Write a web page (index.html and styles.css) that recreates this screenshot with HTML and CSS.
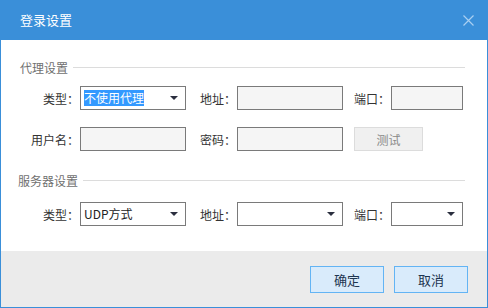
FILE: index.html
```html
<!DOCTYPE html>
<html lang="zh">
<head>
<meta charset="utf-8">
<title>登录设置</title>
<link rel="stylesheet" href="styles.css">
</head>
<body>
<div class="dialog">
  <div class="titlebar">
    <span class="title">登录设置</span>
    <svg class="close" width="11" height="11" viewBox="0 0 11 11"><path d="M0.5 0.5 L10.5 10.5 M10.5 0.5 L0.5 10.5" stroke="#a9cff1" stroke-width="1.2" fill="none"/></svg>
  </div>
  <div class="content">
    <div class="group-head"><span>代理设置</span><i class="rule"></i></div>
    <div class="grid">
      <label class="lbl">类型：</label>
      <div class="ctl select"><span class="sel-text hl">不使用代理</span><span class="arrow"></span></div>
      <label class="lbl">地址：</label>
      <div class="ctl input"></div>
      <label class="lbl">端口：</label>
      <div class="ctl input"></div>

      <label class="lbl">用户名：</label>
      <div class="ctl input"></div>
      <label class="lbl">密码：</label>
      <div class="ctl input"></div>
      <button class="test">测试</button>
    </div>
    <div class="group-head second"><span>服务器设置</span><i class="rule"></i></div>
    <div class="grid">
      <label class="lbl">类型：</label>
      <div class="ctl select"><span class="sel-text">UDP方式</span><span class="arrow"></span></div>
      <label class="lbl">地址：</label>
      <div class="ctl select"><span class="sel-text"></span><span class="arrow"></span></div>
      <label class="lbl">端口：</label>
      <div class="ctl select"><span class="sel-text"></span><span class="arrow"></span></div>
    </div>
  </div>
  <div class="footer">
    <button class="btn">确定</button>
    <button class="btn">取消</button>
  </div>
</div>
</body>
</html>
```
FILE: styles.css
```css
* { box-sizing: border-box; }
html, body { margin: 0; padding: 0; }
body {
  width: 488px;
  height: 308px;
  font-family: "Noto Sans CJK SC", "Noto Sans", sans-serif;
  font-size: 12px;
  color: #333;
  background: #fff;
}
.dialog {
  width: 488px;
  height: 308px;
  display: flex;
  flex-direction: column;
}
.titlebar {
  height: 40px;
  background: #3a8fd9;
  display: flex;
  align-items: center;
  justify-content: space-between;
  padding: 0 14px 0 20px;
}
.title {
  color: #fff;
  font-size: 13px;
  line-height: 16px;
}
.close { display: block; margin-top: 0; }
.content {
  height: 211px;
  border-left: 1px solid #3a8fd9;
  border-right: 1px solid #3a8fd9;
  padding-top: 18px;
}
.group-head {
  height: 18px;
  display: flex;
  align-items: center;
  padding: 0 22px 0 19px;
  color: #707070;
  font-size: 12px;
}
.group-head.second { margin-top: 20px; padding-left: 17px; }
.rule {
  flex: 1;
  height: 1px;
  background: #dcdcdc;
  margin-left: 5px;
  margin-top: 1px;
}
.grid {
  display: grid;
  grid-template-columns: 79px 106px 51px 106px 48px 72px;
  grid-auto-rows: 24px;
  row-gap: 17px;
  margin-top: 10px;
}
.group-head.second + .grid { margin-top: 13px; }
.lbl {
  display: flex;
  align-items: center;
  justify-content: flex-end;
  padding-right: 1px;
  color: #333;
  white-space: nowrap;
}
.ctl {
  border: 1px solid #7a7a7a;
  height: 24px;
}
.input { background: #f5f5f5; }
.select {
  background: #fff;
  display: flex;
  align-items: center;
  justify-content: space-between;
  padding: 0 7px 0 3px;
}
.sel-text { line-height: 16px; color: #222; }
.sel-text.hl { background: #3399ff; color: #fff; }
.arrow {
  width: 0;
  height: 0;
  border-left: 4px solid transparent;
  border-right: 4px solid transparent;
  border-top: 4px solid #2b2f3f;
}
.test {
  grid-column: 5 / span 2;
  justify-self: start;
  margin-left: 11px;
  width: 69px;
  height: 24px;
  background: #f0f0f0;
  border: 1px solid #dcdcdc;
  color: #8a8a8a;
  font-family: inherit;
  font-size: 12px;
  padding: 0;
}
.footer {
  height: 57px;
  background: #ebebeb;
  border-left: 1px solid #3a8fd9;
  border-right: 1px solid #3a8fd9;
  border-bottom: 1px solid #3a8fd9;
  display: flex;
  justify-content: flex-end;
  align-items: flex-start;
  gap: 10px;
  padding: 15px 19px 0 0;
}
.btn {
  width: 74px;
  height: 27px;
  background: #d9ebfb;
  border: 1px solid #63b4f4;
  color: #1e3550;
  font-family: inherit;
  font-size: 13px;
  padding: 0;
}
```
